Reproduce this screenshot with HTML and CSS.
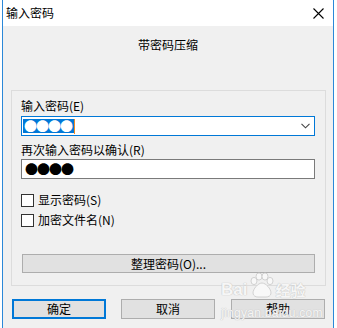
FILE: index.html
```html
<!DOCTYPE html>
<html lang="zh">
<head>
<meta charset="utf-8">
<title>输入密码</title>
<link rel="stylesheet" href="styles.css">
</head>
<body>
<div class="window">
  <div class="titlebar">
    <span class="title">输入密码</span>
    <svg class="close" width="11" height="11" viewBox="0 0 11 11"><path d="M0.5 0.5L10.5 10.5M10.5 0.5L0.5 10.5" stroke="#000" stroke-width="1.1" fill="none"/></svg>
  </div>
  <div class="client">
    <div class="heading">带密码压缩</div>
    <div class="group">
      <div class="lbl">输入密码(E)</div>
      <div class="combo">
        <span class="sel">●●●●</span><span class="caret"></span>
        <svg class="chev" width="9" height="6" viewBox="0 0 9 6"><path d="M0.5 0.8L4.5 4.8L8.5 0.8" stroke="#444" stroke-width="1.1" fill="none"/></svg>
      </div>
      <div class="lbl lbl2">再次输入密码以确认(R)</div>
      <div class="edit"><span class="dots">●●●●</span></div>
      <div class="checks">
        <div class="check"><span class="box"></span><span>显示密码(S)</span></div>
        <div class="check"><span class="box"></span><span>加密文件名(N)</span></div>
      </div>
      <div class="btn org">整理密码(O)...</div>
    </div>
    <div class="buttons">
      <div class="btn default">确定</div>
      <div class="btn">取消</div>
      <div class="btn help">帮助</div>
    </div>
    <div class="watermark">
      <div class="wm-top"><span>Bai</span><svg class="paw" width="26" height="26" viewBox="0 0 26 26"><g fill="#f8f8f8" stroke="#c8c8c8" stroke-width="0.8"><ellipse cx="6" cy="9" rx="3" ry="3.6"/><ellipse cx="11" cy="4.5" rx="3" ry="3.6"/><ellipse cx="17" cy="4.5" rx="3" ry="3.6"/><ellipse cx="22" cy="9" rx="3" ry="3.6"/><path d="M14 11c-4 0-9 6-9 10c0 3 3 4 5 4h8c2 0 5-1 5-4c0-4-5-10-9-10z"/></g></svg><span class="wm-cn">经验</span></div>
      <div class="wm-url">jingyan.baidu.com</div>
    </div>
  </div>
</div>
</body>
</html>
```
FILE: styles.css
```css
html, body {
  margin: 0;
  padding: 0;
  background: #ffffff;
}
body {
  width: 337px;
  height: 328px;
  overflow: hidden;
  font-family: "Noto Sans CJK SC", "Noto Sans", sans-serif;
  font-size: 12px;
  color: #000;
}
.window {
  margin-left: 2px;
  width: 330px;
  height: 328px;
  border-left: 1px solid #2b88d8;
  border-right: 1px solid #2b88d8;
  display: flex;
  flex-direction: column;
}
.titlebar {
  height: 26px;
  background: #fff;
  display: flex;
  align-items: center;
  justify-content: space-between;
  padding: 0 9px 0 3px;
}
.title {
  font-size: 12px;
  line-height: 14px;
}
.close {
  display: block;
  margin-top: 1px;
}
.client {
  flex: 1;
  background: #f0f0f0;
  position: relative;
}
.heading {
  margin-top: 11px;
  height: 16px;
  line-height: 16px;
  text-align: center;
}
.group {
  margin: 37px 7px 0 8px;
  border: 1px solid #dcdcdc;
  padding: 8px 10px 12px 9px;
}
.lbl {
  line-height: 14px;
  height: 14px;
}
.lbl2 {
  margin-top: 7px;
}
.combo, .edit {
  margin-top: 3px;
  height: 20px;
  box-sizing: border-box;
  background: #fff;
  display: flex;
  align-items: center;
  padding-left: 1px;
}
.combo {
  border: 1px solid #0078d7;
  position: relative;
}
.edit {
  margin-top: 2px;
  border: 1px solid #7a7a7a;
  padding-left: 3px;
}
.sel, .dots {
  font-family: "Noto Sans CJK SC", sans-serif;
  font-size: 13px;
  line-height: 14px;
  letter-spacing: -1px;
}
.sel {
  background: #0078d7;
  color: #fff;
  padding: 0 2px 0 1px;
}
.caret {
  width: 1px;
  height: 15px;
  background: #f08a24;
}
.chev {
  position: absolute;
  right: 4px;
  top: 6px;
}
.checks {
  margin-top: 11px;
}
.check {
  height: 20px;
  display: flex;
  align-items: center;
  gap: 4px;
  line-height: 14px;
}
.box {
  width: 11px;
  height: 11px;
  border: 1px solid #333;
  background: #fff;
}
.btn {
  box-sizing: border-box;
  height: 20px;
  border: 1px solid #adadad;
  background: #e1e1e1;
  display: flex;
  align-items: center;
  justify-content: center;
  line-height: 14px;
}
.org {
  margin-top: 24px;
  margin-left: 1px;
  height: 19px;
}
.buttons {
  margin: 13px 0 0 9px;
  display: flex;
  gap: 15px;
}
.buttons .btn {
  width: 94px;
}
.buttons .default {
  border: 2px solid #0078d7;
}
.buttons .help {
  margin-left: 1px;
}
.watermark {
  position: absolute;
  left: 218px;
  top: 246px;
  width: 95px;
  color: #f6f6f6;
  pointer-events: none;
  text-shadow: 0 0 1px #c4c4c4, 0 0 1px #c4c4c4;
}
.wm-top {
  display: flex;
  align-items: flex-end;
  height: 27px;
}
.wm-top span {
  font-family: "Liberation Sans", sans-serif;
  font-weight: bold;
  font-size: 17px;
  line-height: 18px;
}
.wm-top .wm-cn {
  font-family: "Noto Sans CJK SC", sans-serif;
  font-size: 15px;
}
.paw {
  display: block;
  margin: 0 1px 1px;
}
.wm-url {
  margin-top: 8px;
  font-family: "Liberation Sans", sans-serif;
  font-size: 12px;
  line-height: 12px;
  letter-spacing: 0.3px;
}
```
